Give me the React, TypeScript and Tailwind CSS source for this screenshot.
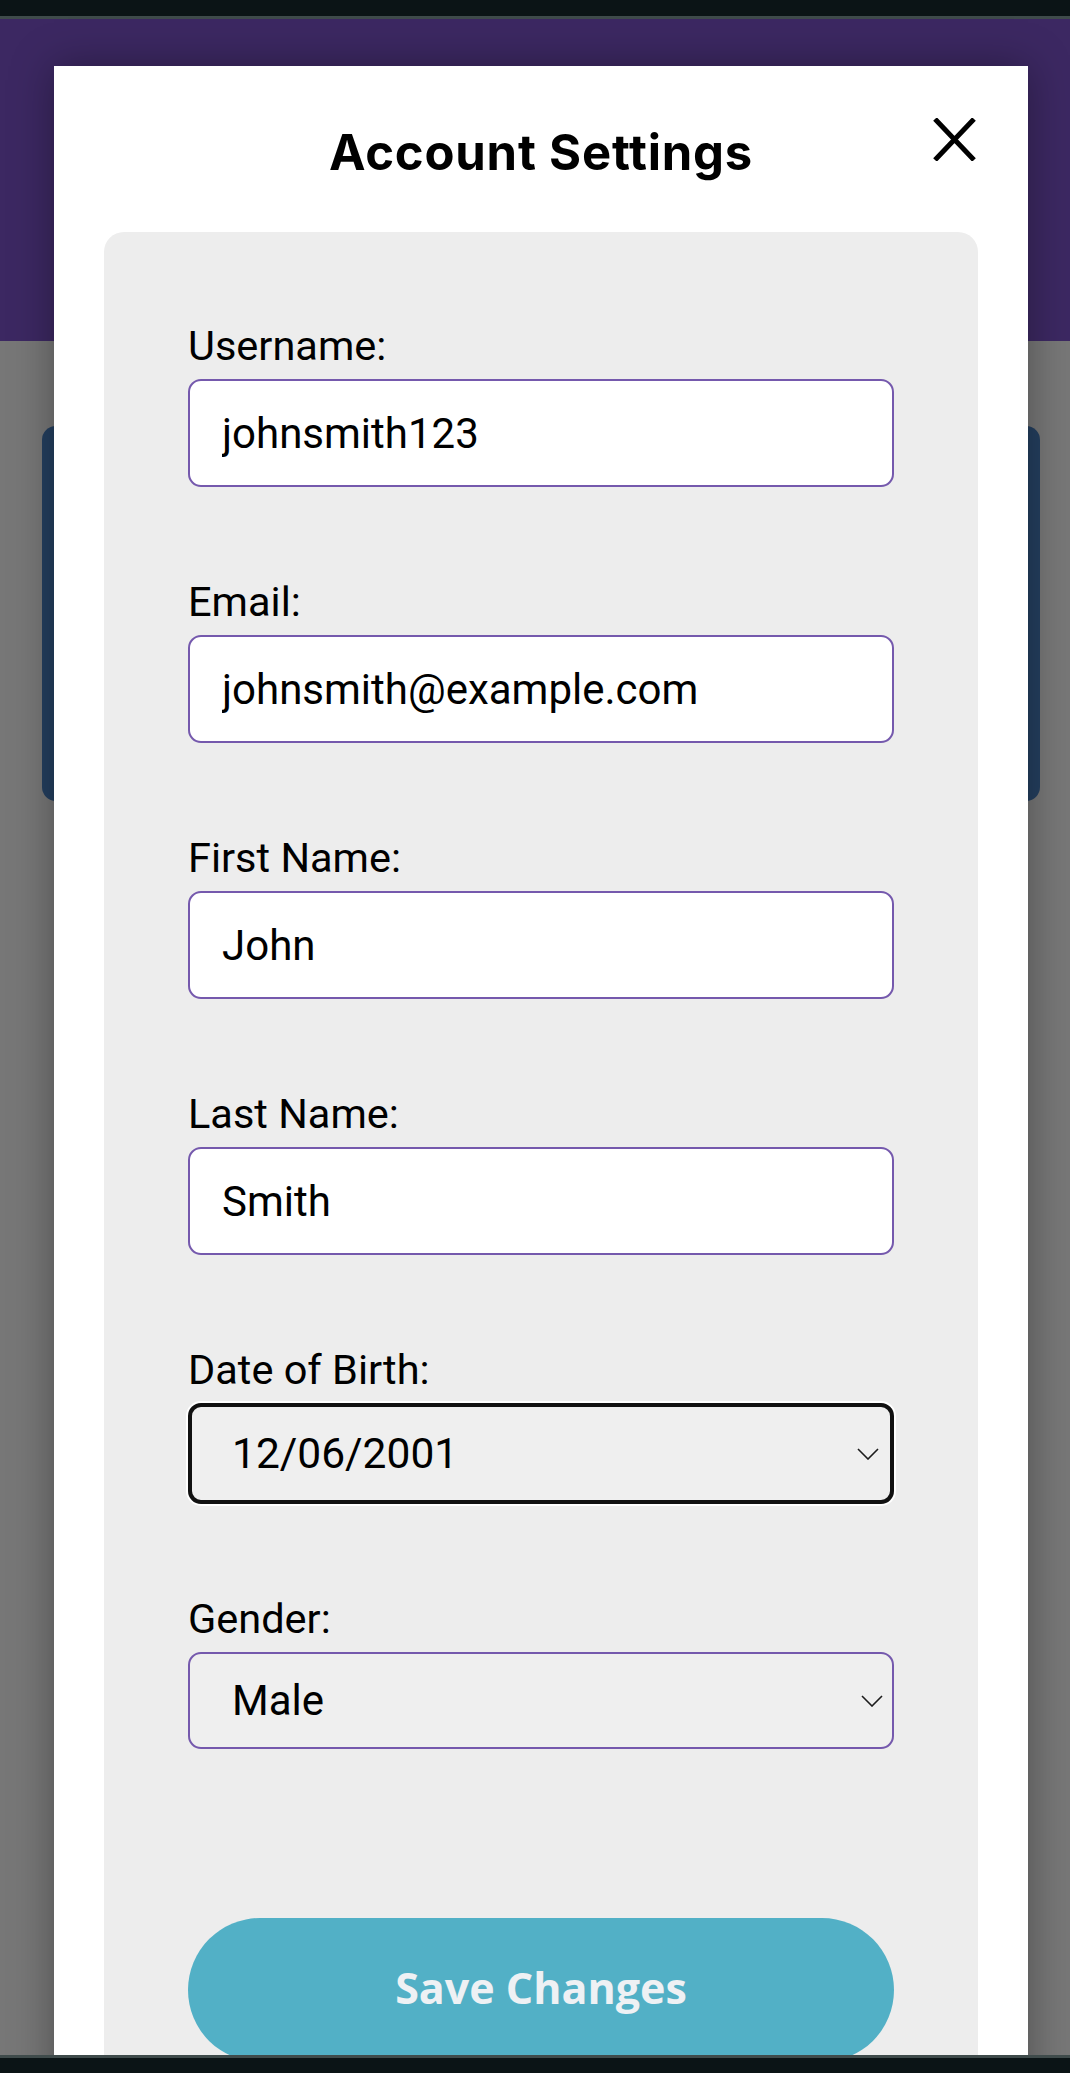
import { useState } from "react";

function Chevron() {
  return (
    <svg
      width="22"
      height="12"
      viewBox="0 0 22 12"
      fill="none"
      className="pointer-events-none absolute right-[11px] top-1/2 -translate-y-1/2"
    >
      <path d="M1 1l10 10L21 1" stroke="#1c1c1c" strokeWidth="1.6" />
    </svg>
  );
}

function Field({ label, children }: { label: string; children: React.ReactNode }) {
  return (
    <div className="flex flex-col">
      <label className="text-[41.5px] leading-[48px] text-black">{label}</label>
      <div className="mt-[9px]">{children}</div>
    </div>
  );
}

function TextInput({ value }: { value: string }) {
  const [v, setV] = useState(value);
  return (
    <input
      value={v}
      onChange={(e) => setV(e.target.value)}
      className="block h-[108px] w-full rounded-[13px] border-2 border-[#7559ad] bg-white px-[32px] text-[42px] text-black outline-none"
    />
  );
}

export default function App() {
  const [gender, setGender] = useState("Male");

  return (
    <div className="relative h-[2073px] w-full overflow-hidden bg-[#777777] font-['Roboto',sans-serif]">
      {/* page behind the overlay */}
      <div className="h-4 bg-[#0b1416]" />
      <div className="h-[3px] bg-[#3f4b4b]" />
      <header className="h-[322px] bg-[#3c2862]" />
      <div className="ml-[42px] mr-[30px] mt-[85px] h-[375px] rounded-[14px] bg-[#243f5f]" />

      {/* modal */}
      <div className="absolute left-[54px] top-[66px] h-[2040px] w-[974px] bg-white px-[50px] pt-[63px] shadow-[0_0_40px_rgba(0,0,0,0.35)]">
        <button className="absolute right-[52px] top-[52px] h-[43px] w-[43px]" aria-label="Close">
          <svg width="43" height="43" viewBox="0 0 43 43" fill="none">
            <path d="M2 1l39 41M41 1L2 42" stroke="#000" strokeWidth="5" />
          </svg>
        </button>

        <h1 className="text-center font-['Inter',sans-serif] text-[49px] font-bold leading-[48px] tracking-[0.8px] text-black">
          Account Settings
        </h1>

        <div className="mt-[55px] h-[1900px] rounded-t-[20px] bg-[#ededed] px-[84px] pt-[90px]">
          <div className="flex flex-col gap-[91px]">
            <Field label="Username:">
              <TextInput value="johnsmith123" />
            </Field>
            <Field label="Email:">
              <TextInput value="johnsmith@example.com" />
            </Field>
            <Field label="First Name:">
              <TextInput value="John" />
            </Field>
            <Field label="Last Name:">
              <TextInput value="Smith" />
            </Field>
            <Field label="Date of Birth:">
              <div className="relative flex h-[101px] w-full items-center rounded-[13px] border-[4px] border-[#111111] bg-[#efefef] pl-[40px] text-[42.5px] text-black shadow-[0_0_0_2px_#ffffff]">
                12/06/2001
                <Chevron />
              </div>
            </Field>
            <Field label="Gender:">
              <div className="relative">
                <select
                  value={gender}
                  onChange={(e) => setGender(e.target.value)}
                  className="block h-[97px] w-full appearance-none rounded-[13px] border-2 border-[#7559ad] bg-[#efefef] pl-[42px] text-[42px] text-black outline-none"
                >
                  <option>Male</option>
                  <option>Female</option>
                  <option>Other</option>
                </select>
                <Chevron />
              </div>
            </Field>
          </div>

          <button className="mt-[169px] flex h-[144px] w-full items-center justify-center rounded-full bg-[#52b0c6] pb-[4px] font-['Open_Sans',sans-serif] text-[43px] font-bold text-[#eef1f4]">
            Save Changes
          </button>
        </div>
      </div>

      {/* bottom bar */}
      <div className="absolute inset-x-0 bottom-0 h-[18px] border-t-[3px] border-[#3f4b4b] bg-[#0b1416]" />
    </div>
  );
}
